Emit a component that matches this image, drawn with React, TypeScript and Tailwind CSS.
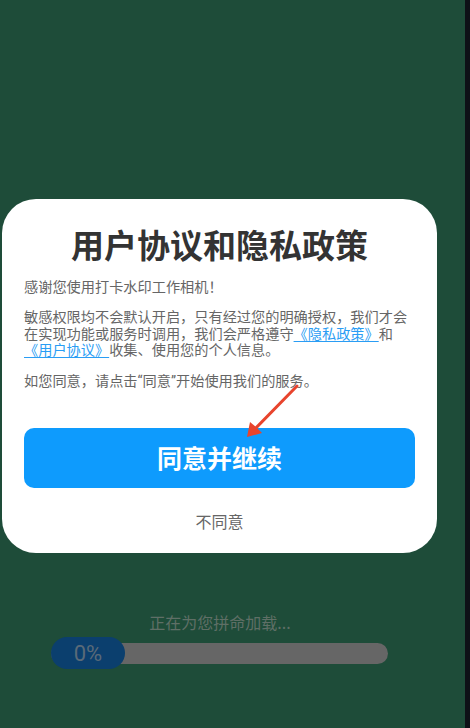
import React from "react";

const cjk = { fontFamily: '"Noto Sans CJK SC", "Noto Sans", sans-serif' };
const latin = { fontFamily: 'Roboto, "Noto Sans CJK SC", sans-serif' };

function PolicyCard() {
  return (
    <div
      className="ml-[2px] mt-[199px] w-[435px] rounded-[34px] bg-white px-[22px] pb-[20px] pt-[25px]"
      style={cjk}
    >
      <h1 className="text-center text-[33px] font-bold leading-[40px] text-[#333]">
        用户协议和隐私政策
      </h1>
      <div className="mt-[14px] text-[14.2px] leading-[16.4px] text-[#666]">
        <p>感谢您使用打卡水印工作相机！</p>
        <p className="mt-[14px]">
          敏感权限均不会默认开启，只有经过您的明确授权，我们才会在实现功能或服务时调用，我们会严格遵守
          <a className="text-[#2a9df4] underline underline-offset-2">《隐私政策》</a>和
          <a className="text-[#2a9df4] underline underline-offset-2">《用户协议》</a>
          收集、使用您的个人信息。
        </p>
        <p className="mt-[14px] h-[16.4px]">
          如您同意，请点击<span style={latin}>“</span>同意<span style={latin}>”</span>开始使用我们的服务。
        </p>
      </div>
      <button className="mt-[40px] flex h-[60px] w-full items-center justify-center rounded-[10px] bg-[#0e9bfd] text-[25px] font-bold text-white">
        同意并继续
      </button>
      <div className="mt-[21px] text-center text-[16px] leading-6 text-[#666]">不同意</div>
    </div>
  );
}

function Loading() {
  return (
    <div className="w-[440px]">
      <div className="mt-[57px] text-center text-[16px] leading-6 text-[#5f6f66]" style={cjk}>
        正在为您拼命加载...
      </div>
      <div className="relative ml-[51px] mt-[3px] flex h-[32px] w-[337px] items-center">
        <div className="h-[21px] w-full rounded-full bg-[#666]" />
        <div
          className="absolute left-0 top-0 flex h-[32px] w-[74px] items-center justify-center rounded-full bg-[#0b3f6e] text-[22px] text-[#5a6a78]"
          style={{ fontFamily: "Roboto, sans-serif" }}
        >
          0%
        </div>
      </div>
    </div>
  );
}

export default function App() {
  return (
    <div className="flex h-[728px] w-[470px] overflow-hidden">
      <div className="relative h-full w-[465px] bg-[#1e4c39]">
        <PolicyCard />
        <Loading />
        {/* hint arrow drawn over the dialog */}
        <svg className="absolute left-[240px] top-[380px]" width="65" height="65" viewBox="0 0 65 65">
          <line x1="57" y1="6" x2="14" y2="50" stroke="#e8442d" strokeWidth="3" strokeLinecap="round" />
          <polygon points="7,57 10,42 16.5,47.5 22,53" fill="#e8442d" />
        </svg>
      </div>
      <div className="h-full w-[5px] bg-[#0e1117]" />
    </div>
  );
}
